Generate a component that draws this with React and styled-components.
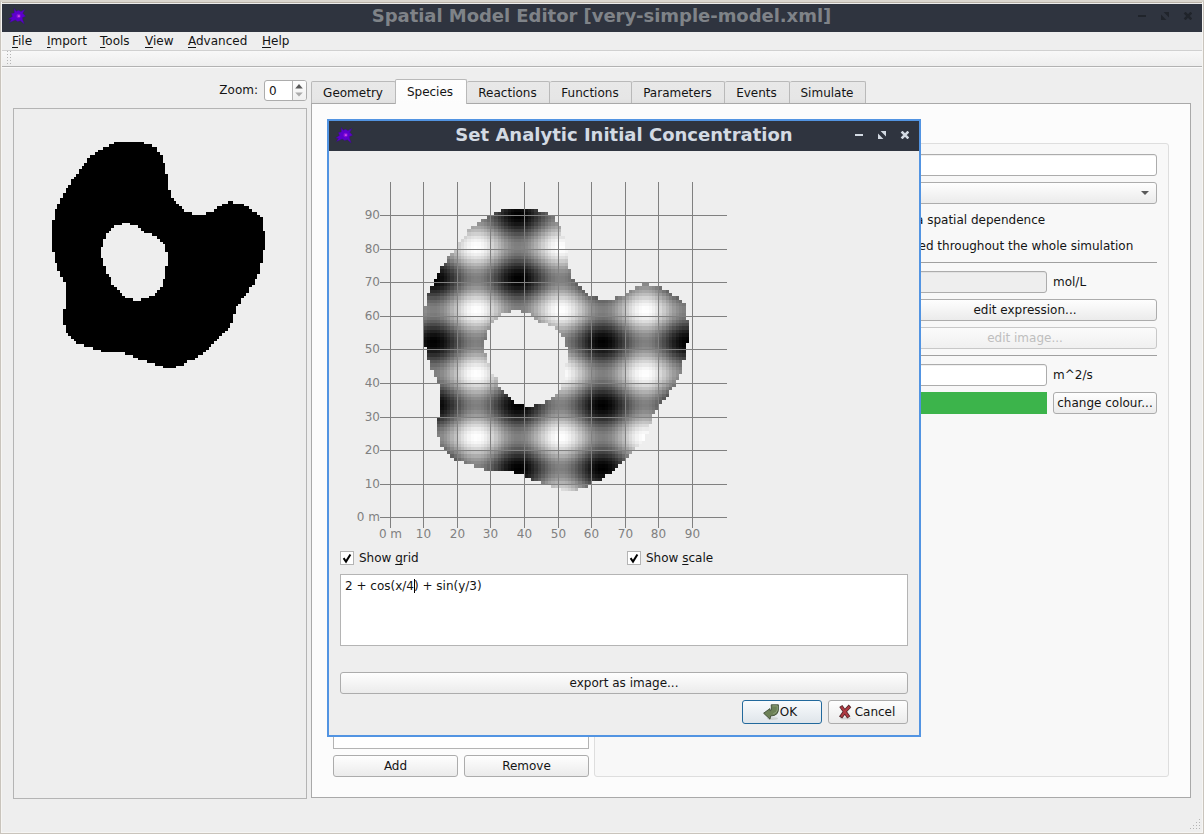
import React from "react";
import styled, { createGlobalStyle, css } from "styled-components";

const Global = createGlobalStyle`
  * { box-sizing: border-box; }
  body { margin: 0; overflow: hidden; background: #eeeeee; }
  #root { font: 12px/14px "DejaVu Sans", sans-serif; color: #141414; }
`;

/* ---------- cell geometry: [first row, column] steps on a 100 x 100 grid ---------- */

const LEFT = [
  [8, 33], [9, 31], [10, 29], [11, 27], [12, 26], [13, 24], [14, 23], [16, 22], [17, 21], [18, 20],
  [20, 19], [21, 18], [22, 17], [24, 16], [25, 15], [27, 14], [29, 13], [31, 12], [33, 11], [37, 10],
  [49, 11], [53, 12], [56, 13], [58, 14], [60, 15], [70, 14], [76, 15], [79, 16], [80, 17], [81, 18],
  [82, 19], [83, 22], [84, 25], [85, 28], [86, 37], [87, 40], [88, 42], [89, 45], [90, 48], [91, 51],
];
const RIGHT = [
  [8, 44], [9, 47], [10, 49], [12, 50], [13, 51], [16, 52], [20, 53], [26, 54], [29, 55], [30, 56],
  [31, 57], [32, 58], [33, 59], [34, 62], [35, 87], [36, 88], [41, 89], [48, 88], [53, 87], [57, 86],
  [59, 85], [61, 84], [62, 83], [64, 82], [65, 81], [66, 80], [68, 79], [69, 78], [72, 77], [75, 76],
  [77, 75], [78, 74], [79, 73], [80, 72], [81, 71], [82, 70], [83, 69], [84, 68], [85, 67], [86, 66],
  [87, 64], [88, 63], [89, 60], [90, 59], [91, 56],
];
const LOBE = { 30: [75, 77], 31: [73, 81], 32: [71, 83], 33: [70, 84], 34: [67, 86] };
const HOLE_LEFT = [
  [38, 36], [39, 33], [40, 32], [41, 31], [42, 30], [44, 29], [47, 28], [51, 29], [54, 30],
  [57, 31], [58, 32], [61, 33], [62, 34], [63, 35], [64, 36], [65, 37], [66, 40],
];
const HOLE_RIGHT = [
  [38, 39], [39, 42], [40, 43], [41, 44], [42, 47], [43, 49], [44, 50], [45, 51], [46, 52],
  [49, 53], [54, 52], [59, 51], [62, 50], [63, 49], [64, 48], [65, 46], [66, 43],
];

const stepAt = (steps, row) => {
  let value = steps[0][1];
  for (const [start, col] of steps) if (start <= row) value = col;
  return value;
};

const runsOf = (row) => {
  const l = stepAt(LEFT, row);
  const r = stepAt(RIGHT, row);
  if (row >= 38 && row <= 66) return [[l, stepAt(HOLE_LEFT, row)], [stepAt(HOLE_RIGHT, row), r]];
  return LOBE[row] ? [[l, r], LOBE[row]] : [[l, r]];
};

const ROWS = Array.from({ length: 84 }, (_, i) => i + 8);

const pixelRect = (ox, oy, s, c0, c1, row) => {
  const x = Math.round(ox + s * c0);
  const y = Math.round(oy + s * row);
  return { x, y, width: Math.round(ox + s * c1) - x, height: Math.round(oy + s * (row + 1)) - y };
};

const Drawing = styled.svg`
  display: block;
  flex: none;
  shape-rendering: crispEdges;
`;

function GeometryImage() {
  return (
    <Drawing width="292" height="689" viewBox="14 109 292 689">
      {ROWS.flatMap((row) =>
        runsOf(row).map(([a, b]) => <rect key={`${row}-${a}`} {...pixelRect(25, 120.05, 2.7, a, b, row)} />)
      )}
    </Drawing>
  );
}

const TICKS = [0, 1, 2, 3, 4, 5, 6, 7, 8, 9];
const PlotText = styled.text`
  font-size: 12px;
  fill: #808080;
`;

function ConcentrationPlot() {
  const cells = [];
  for (const row of ROWS)
    for (const [a, b] of runsOf(row))
      for (let col = a; col < b; col++) {
        const v = Math.round((255 * (2 + Math.cos(col / 4) + Math.sin((99 - row) / 3))) / 4);
        cells.push(
          <rect key={`${row}-${col}`} {...pixelRect(390, 182, 3.36, col, col + 1, row)} fill={`rgb(${v},${v},${v})`} />
        );
      }
  return (
    <Drawing width="568" height="389" viewBox="340 162 568 389">
      {cells}
      {TICKS.map((t) => {
        const x = Math.floor(390 + 33.6 * t);
        const y = Math.floor(517.9 - 33.6 * t);
        return (
          <g key={t}>
            <rect x={x} y="182" width="1" height="346" fill="#808080" />
            <rect x="380" y={y} width="347" height="1" fill="#808080" />
            <PlotText x={x + 0.5} y="538" textAnchor="middle">{t ? t * 10 : "0 m"}</PlotText>
            <PlotText x="380" y={y + 4} textAnchor="end">{t ? t * 10 : "0 m"}</PlotText>
          </g>
        );
      })}
    </Drawing>
  );
}

/* ---------- window frame ---------- */

const Window = styled.div`
  position: relative;
  width: 1204px;
  height: 834px;
  display: flex;
  flex-direction: column;
  border: 1px solid #c9c4bc;
  border-top: 2px solid #dad6ce;
  background: #eeeeee;
`;

const Frame = styled.div`
  flex: 1;
  display: flex;
  flex-direction: column;
  border: 1px solid #f6f5f3;
  border-top: 0;
  box-shadow: inset 0 1px #b9b1a6;
  padding-top: 2px;
`;

const TitleBar = styled.div`
  flex: none;
  display: flex;
  height: ${(p) => (p.$dialog ? 30 : 28)}px;
  padding: 0 10px 0 6px;
  background: #2f343f;
  color: ${(p) => (p.$dialog ? "#d3dae3" : "#7f8388")};
`;

const Title = styled.div`
  flex: 1;
  text-align: center;
  font-size: 18px;
  font-weight: bold;
  line-height: 22px;
  padding-top: ${(p) => (p.$dialog ? 3 : 1)}px;
  padding-left: ${(p) => p.$shift}px;
  letter-spacing: ${(p) => p.$track || 0}px;
  white-space: nowrap;
`;

const Controls = styled.svg`
  display: block;
  flex: none;
  margin-top: ${(p) => (p.$dialog ? 10 : 8)}px;
  color: ${(p) => (p.$dialog ? "#d3dae3" : "#20242b")};
`;

const Logo = styled.svg`
  display: block;
  flex: none;
  margin-top: ${(p) => (p.$dialog ? 6 : 4)}px;
`;

function AppLogo({ dialog }) {
  return (
    <Logo $dialog={dialog} width="18" height="17" viewBox="0 0 18 17">
      <path
        d="M6.2 0.4L8.2 3.2L10.5 2.2L13 3.6L16.8 1.6L14.8 5.2L17.6 8.2L14.6 9.6L14.8 12L16.2 16L12.4 12.8L9.6 13.4L7.2 12L5 13L1.6 14.6L3.4 11.4L0.6 11L4.4 8.4L3.4 5.4L6.2 5Z"
        fill="#5c00cc"
        stroke="#3a0c86"
        strokeWidth="0.4"
      />
      <circle cx="10.6" cy="8" r="2.2" fill="#8410d8" />
      <rect x="9.8" y="7.2" width="2" height="1.8" fill="#d048ea" />
    </Logo>
  );
}

function WindowControls({ dialog }) {
  return (
    <Controls $dialog={dialog} width="54" height="8" viewBox="0 0 54 8">
      <rect x="0" y="3" width="8" height="2" fill="currentColor" />
      <path d="M2.6 0H8V5.4ZM0 2.6L5.4 8H0Z" fill="currentColor" transform="translate(23 0)" />
      <path d="M0.6 0.6L7.4 7.4M7.4 0.6L0.6 7.4" stroke="currentColor" strokeWidth="2.6" transform="translate(46 0)" />
    </Controls>
  );
}

const MenuBar = styled.div`
  flex: none;
  display: flex;
  height: 19px;
  padding: 2px 0 0 10px;
  border-bottom: 1px solid #d0d0d0;
`;
const MenuItem = styled.div`
  width: ${(p) => p.$w}px;
  white-space: nowrap;
`;
const Mnemonic = styled.span`
  text-decoration: underline;
  text-underline-offset: 2px;
  text-decoration-thickness: 1px;
  text-decoration-skip-ink: none;
`;
const ToolBar = styled.div`
  flex: none;
  height: 17px;
  padding: 0 5px;
  border-bottom: 1px solid #fafafa;
  box-shadow: inset 0 -1px #b2b2b2;
  background: linear-gradient(#f8f8f8, #ededed);
`;
const Grip = styled.div`
  width: 5px;
  height: 15px;
  background-image: radial-gradient(circle at 0.5px 0.5px, #b4b4b4 0.6px, transparent 0.7px);
  background-size: 3px 3px;
`;

/* ---------- shared widgets ---------- */

const Button = styled.div`
  display: flex;
  align-items: center;
  justify-content: center;
  width: ${(p) => (p.$w ? `${p.$w}px` : "auto")};
  height: ${(p) => p.$h || 22}px;
  border: 1px solid #acacac;
  border-radius: 3px;
  background: linear-gradient(#fefefe, #ebebeb);
  white-space: nowrap;
  ${(p) => p.$primary && css`border-color: #22699c; background: linear-gradient(#f9fbfd, #dfe5ea);`}
  ${(p) => p.$disabled && css`border-color: #c8c8c8; color: #bebebe; background: linear-gradient(#fbfbfb, #f0f0f0);`}
`;

const IconButton = styled(Button)`
  gap: ${(p) => p.$gap}px;
  padding-right: ${(p) => p.$pad}px;
`;

const Input = styled.div`
  width: ${(p) => (p.$w ? `${p.$w}px` : "auto")};
  height: 22px;
  border: 1px solid #acacac;
  border-radius: 3px;
  background: ${(p) => (p.$disabled ? "#eeeeee" : "#ffffff")};
  box-shadow: inset 0 1px ${(p) => (p.$disabled ? "#e2e2e2" : "#f0f0f0")};
`;

const Row = styled.div`
  display: flex;
  align-items: center;
  gap: 6px;
`;

/* ---------- main body ---------- */

const Body = styled.div`
  flex: 1;
  display: flex;
  gap: 4px;
  padding: 12px 11px 0;
`;
const Side = styled.div`
  width: 294px;
`;
const ZoomRow = styled(Row)`
  height: 21px;
  align-items: flex-start;
  justify-content: flex-end;
`;
const ZoomLabel = styled.span`
  padding-top: 3px;
`;
const SpinBox = styled.div`
  display: flex;
  width: 43px;
  height: 21px;
  border: 1px solid #acacac;
  border-radius: 3px;
  background: #fff;
  overflow: hidden;
`;
const SpinValue = styled.div`
  flex: none;
  width: 28px;
  padding: 3px 0 0 4px;
  border-right: 1px solid #b4b4b4;
`;
const SpinArrows = styled.svg`
  display: block;
  flex: none;
  background: linear-gradient(#fefefe, #f0f0f0);
`;
const Viewer = styled.div`
  height: 691px;
  margin-top: 7px;
  border: 1px solid #b4b4b4;
`;
const Main = styled.div`
  width: 880px;
`;
const Tabs = styled.div`
  display: flex;
  align-items: flex-end;
  height: 23px;
`;
const Tab = styled.div`
  width: ${(p) => p.$w}px;
  height: 22px;
  padding: 4px 1px 0 0;
  text-align: center;
  border: 1px solid #b9b9b9;
  border-bottom: 0;
  border-left-width: ${(p) => (p.$first ? 1 : 0)}px;
  border-radius: 2px 2px 0 0;
  background: linear-gradient(#e8e8e8, #e6e6e6 80%, #e0e0e0);
  ${(p) => p.$selected && css`
    width: ${p.$w + 1}px;
    height: 25px;
    margin: 0 0 -1px -1px;
    padding: 5px 2px 0 0;
    border-left-width: 1px;
    background: linear-gradient(#fefefe, #fcfcfc);
    z-index: 1;
  `}
`;
const TabPage = styled.div`
  display: flex;
  gap: 5px;
  height: 695px;
  padding: 39px 21px 20px;
  border: 1px solid #a9a9a9;
  background: #fcfcfc;
`;
const SpeciesColumn = styled.div`
  display: flex;
  flex-direction: column;
  gap: 6px;
  width: 256px;
`;
const SpeciesList = styled.div`
  flex: 1;
  border: 1px solid #b4b4b4;
  background: #fff;
`;
const GroupBox = styled.div`
  width: 575px;
  height: 634px;
  padding: 10px 11px;
  border: 1px solid #dedede;
  border-radius: 3px;
  background: #f8f8f8;
`;
const Stack = styled.div`
  display: flex;
  flex-direction: column;
  align-items: ${(p) => (p.$end ? "flex-end" : "stretch")};
  gap: 6px;
`;
const Combo = styled(Button)`
  justify-content: flex-end;
  padding-right: 6px;
`;
const Option = styled.div`
  height: 20px;
  line-height: 20px;
  padding-left: ${(p) => p.$x}px;
  white-space: nowrap;
`;
const Rule = styled.div`
  height: 1px;
  margin: 6px 0 8px;
  background: #a0a0a0;
`;
const Unit = styled.div`
  width: 104px;
`;
const Swatch = styled.div`
  width: 154px;
  height: 22px;
  background: #3cb44b;
`;
const SizeGrip = styled.svg`
  position: absolute;
  right: 2px;
  bottom: 2px;
`;

/* ---------- dialog ---------- */

const Dialog = styled.div`
  position: absolute;
  left: 326px;
  top: 117px;
  width: 594px;
  height: 618px;
  border: 2px solid #5294e2;
  background: #eeeeee;
  z-index: 5;
`;
const DialogBody = styled.div`
  display: flex;
  flex-direction: column;
  padding: 11px;
`;
const Checks = styled.div`
  display: grid;
  grid-template-columns: 287px 1fr;
  height: 14px;
`;
const Check = styled.div`
  display: flex;
  gap: 5px;
  white-space: nowrap;
`;
const CheckMark = styled.svg`
  flex: none;
  width: 14px;
  height: 14px;
  border: 1px solid #b4b4b4;
  background: #fff;
`;
const Editor = styled.div`
  height: 72px;
  margin: 9px 0 26px;
  padding: 4px;
  border: 1px solid #b4b4b4;
  background: #fff;
  white-space: pre;
`;
const Caret = styled.span`
  display: inline-block;
  width: 1px;
  height: 14px;
  margin-right: -1px;
  vertical-align: top;
  background: #000;
`;
const DialogButtons = styled(Row)`
  justify-content: flex-end;
  margin-top: 6px;
`;

function CheckBox({ before, mnemonic, after }) {
  return (
    <Check>
      <CheckMark viewBox="0 0 12 12">
        <path d="M2.6 6.2L5 9.6L9.4 2.4" fill="none" stroke="#000" strokeWidth="2" />
      </CheckMark>
      <span>{before}<Mnemonic>{mnemonic}</Mnemonic>{after}</span>
    </Check>
  );
}

function OkIcon() {
  return (
    <svg width="17" height="17" viewBox="0 0 17 17">
      <ellipse cx="9.5" cy="14.6" rx="5.5" ry="1.4" fill="#cdd2d2" />
      <path
        d="M8.2 0.8H15.4V6.4Q15 10 11.4 11.4L7.6 12L7 15.2L0.6 9.2L7 4.6L7.2 6.8Q8.6 6.6 8.4 5Z"
        fill="#6c8157"
        stroke="#3f4d38"
        strokeWidth="0.9"
        strokeLinejoin="round"
      />
      <path d="M9.4 1.9H14.3V6Q13.8 8.8 10.2 9.8" fill="none" stroke="#8fa27b" strokeWidth="0.9" />
    </svg>
  );
}
function CancelIcon() {
  return (
    <svg width="15" height="16" viewBox="0 0 15 16">
      <ellipse cx="7.5" cy="14.4" rx="5.5" ry="1.2" fill="#d2d2d2" />
      <path d="M2.8 2Q6 6.5 10.8 13.4M12 1.8Q7 6.5 2.6 13.6" fill="none" stroke="#55272b" strokeWidth="3.8" />
      <path d="M3.2 2.6Q6 6.5 10.4 12.8M11.4 2.6Q7 6.5 3.2 12.8" fill="none" stroke="#b03a42" strokeWidth="2.1" />
    </svg>
  );
}

const MENUS = [["File", 35], ["Import", 53], ["Tools", 45], ["View", 43], ["Advanced", 74], ["Help", 40]];
const TABS = [
  ["Geometry", 85], ["Species", 71], ["Reactions", 83], ["Functions", 82],
  ["Parameters", 93], ["Events", 65], ["Simulate", 76],
];

export default function App() {
  return (
    <>
      <Global />
      <Window>
        <Frame>
          <TitleBar>
            <AppLogo />
            <Title $shift={39} $track={-0.04}>Spatial Model Editor [very-simple-model.xml]</Title>
            <WindowControls />
          </TitleBar>
          <MenuBar>
            {MENUS.map(([m, w]) => (
              <MenuItem key={m} $w={w}><Mnemonic>{m[0]}</Mnemonic>{m.slice(1)}</MenuItem>
            ))}
          </MenuBar>
          <ToolBar><Grip /></ToolBar>
          <Body>
            <Side>
              <ZoomRow>
                <ZoomLabel>Zoom:</ZoomLabel>
                <SpinBox>
                  <SpinValue>0</SpinValue>
                  <SpinArrows width="13" height="19" viewBox="0 0 13 19">
                    <path d="M2.2 7.4L6 3L9.8 7.4Z" fill="#5a5a5a" />
                    <path d="M2.2 11.4L6 15.6L9.8 11.4Z" fill="#aaaaaa" />
                  </SpinArrows>
                </SpinBox>
              </ZoomRow>
              <Viewer><GeometryImage /></Viewer>
            </Side>
            <Main>
              <Tabs>
                {TABS.map(([t, w], i) => (
                  <Tab key={t} $w={w} $first={i === 0} $selected={i === 1}>{t}</Tab>
                ))}
              </Tabs>
              <TabPage>
                <SpeciesColumn>
                  <SpeciesList />
                  <Row>
                    <Button $w={125}>Add</Button>
                    <Button $w={125}>Remove</Button>
                  </Row>
                </SpeciesColumn>
                <GroupBox>
                  <Stack>
                    <Input />
                    <Combo>
                      <svg width="10" height="6" viewBox="0 0 10 6"><path d="M1 1H9L5 5Z" fill="#5a5a5a" /></svg>
                    </Combo>
                    <Option $x={310}>a spatial dependence</Option>
                    <Option $x={312.5}>ed throughout the whole simulation</Option>
                  </Stack>
                  <Rule />
                  <Stack $end>
                    <Row><Input $w={154} $disabled /><Unit>mol/L</Unit></Row>
                    <Button $w={264}>edit expression...</Button>
                    <Button $w={264} $disabled>edit image...</Button>
                  </Stack>
                  <Rule />
                  <Stack $end>
                    <Row><Input $w={154} /><Unit>m^2/s</Unit></Row>
                    <Row><Swatch /><Button $w={104}>change colour...</Button></Row>
                  </Stack>
                </GroupBox>
              </TabPage>
            </Main>
          </Body>
        </Frame>
        <SizeGrip width="12" height="12" viewBox="0 0 12 12">
          {[[10, 0], [7, 3], [10, 3], [4, 6], [7, 6], [10, 6], [1, 9], [4, 9], [7, 9], [10, 9]].map(([x, y]) => (
            <rect key={`${x}-${y}`} x={x} y={y} width="1" height="1" fill="#b4b4b4" />
          ))}
        </SizeGrip>
        <Dialog>
          <TitleBar $dialog>
            <AppLogo dialog />
            <Title $dialog $shift={40}>Set Analytic Initial Concentration</Title>
            <WindowControls dialog />
          </TitleBar>
          <DialogBody>
            <ConcentrationPlot />
            <Checks>
              <CheckBox before="Show " mnemonic="g" after="rid" />
              <CheckBox before="Show " mnemonic="s" after="cale" />
            </Checks>
            <Editor>2 + cos(x/4<Caret />) + sin(y/3)</Editor>
            <Button>export as image...</Button>
            <DialogButtons>
              <IconButton $w={80} $h={24} $gap={0} $pad={4} $primary><OkIcon />OK</IconButton>
              <IconButton $w={80} $h={24} $gap={2} $pad={3}><CancelIcon />Cancel</IconButton>
            </DialogButtons>
          </DialogBody>
        </Dialog>
      </Window>
    </>
  );
}
